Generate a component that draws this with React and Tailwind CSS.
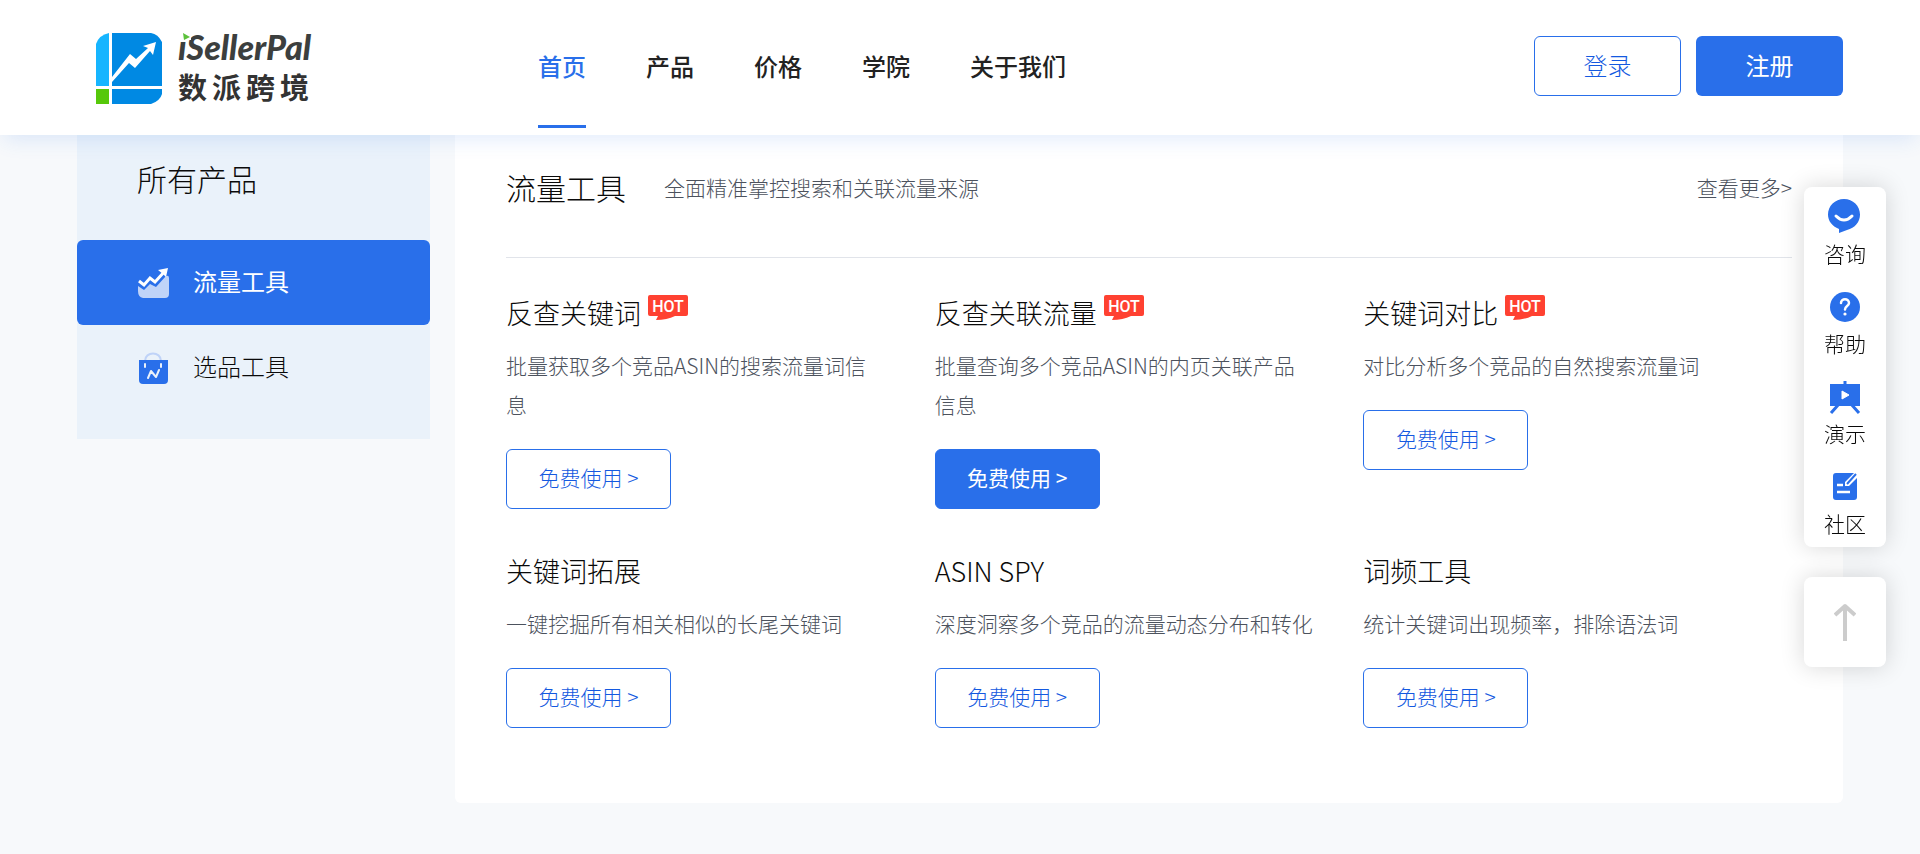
import React from 'react';
import clsx from 'clsx';

const navItems = ['首页', '产品', '价格', '学院', '关于我们'];

const tools = [
  { title: '反查关键词', desc: '批量获取多个竞品ASIN的搜索流量词信息', hot: true },
  { title: '反查关联流量', desc: '批量查询多个竞品ASIN的内页关联产品信息', hot: true, active: true },
  { title: '关键词对比', desc: '对比分析多个竞品的自然搜索流量词', hot: true },
  { title: '关键词拓展', desc: '一键挖掘所有相关相似的长尾关键词' },
  { title: 'ASIN SPY', desc: '深度洞察多个竞品的流量动态分布和转化' },
  { title: '词频工具', desc: '统计关键词出现频率，排除语法词' },
];

function Logo() {
  return (
    <svg width="220" height="84" viewBox="0 -5 220 84" role="img" aria-label="iSellerPal 数派跨境">
      <path d="M0 57V15Q3 6 13 4V57Z" fill="#16b5ff" />
      <rect x="0" y="60" width="13" height="15" fill="#56c80a" />
      <path d="M16 4H55Q62 5 66 13V57H16Z" fill="#0089e3" />
      <path d="M16 60H66V65Q64 72 55 75H16Z" fill="#0089e3" />
      <path d="M16 48L34 25L40 30L52 19L47 17L60 13L57 26L54 22L39 39L33 34L16 53Z" fill="#fff" />
      <text x="82" y="31" fontSize="34" fontWeight="900" fontStyle="italic" fill="#3c3f3e" fontFamily="Lato, sans-serif">
        iSellerPal
      </text>
      <path d="M84 2H95V11H84Z" fill="#fff" />
      <path d="M87 4L94 8L88 11Z" fill="#5cc13c" />
      <text x="82 116 150 184" y="70" fontSize="29" fontWeight="700" fill="#333" fontFamily="Lato, 'Noto Sans CJK SC', sans-serif">
        数派跨境
      </text>
    </svg>
  );
}

function TrafficIcon() {
  return (
    <svg width="32" height="32" viewBox="0 0 32 32" aria-hidden="true">
      <path d="M1 19L7 23L13 17L19 20L29 9Q32 8 32 11V27Q32 31 28 31H6Q1 30 1 24Z" fill="#bfd3f8" />
      <path d="M2 14L7 18L13 11L18 15L28 4" fill="none" stroke="#fff" strokeWidth="3" />
      <path d="M21 3L31 1L29 10L26 7Z" fill="#fff" />
    </svg>
  );
}

function BagIcon() {
  return (
    <svg width="32" height="34" viewBox="0 0 32 34" aria-hidden="true">
      <path d="M8 10C8 0 24 0 24 10" fill="none" stroke="#bfd3f8" strokeWidth="2" />
      <path d="M2 9H31V29Q31 33 27 33H6Q2 33 2 29Z" fill="#296fea" />
      <path d="M8 13V16M24 13V16" stroke="#eaf1fa" strokeWidth="2" strokeLinecap="round" />
      <path d="M11 27L14 20L19 26L22 19" fill="none" stroke="#eaf1fa" strokeWidth="2" strokeLinecap="round" strokeLinejoin="round" />
    </svg>
  );
}

function HotBadge() {
  return (
    <svg className="mt-0.5 ml-[7px]" width="40" height="26" viewBox="0 0 40 26">
      <path d="M2 0H38Q40 0 40 2V19Q40 21 38 21H27Q19 25 8 25L10 21H2Q0 21 0 19V2Q0 0 2 0Z" fill="#ff4131" />
      <text x="20" y="17" textAnchor="middle" fontSize="16" fontWeight="500" fill="#fff" fontFamily="Roboto, sans-serif">
        HOT
      </text>
    </svg>
  );
}

const floatItems = [
  {
    label: '咨询',
    icon: (
      <>
        <path d="M16 0C7 0 0 7 0 15.500C0 22 4 27 11 30V34L19 31C27 29 32 23 32 15.500C32 7 25 0 16 0Z" fill="#296fea" />
        <path d="M8 17Q16 25 24 17" fill="none" stroke="#fff" strokeWidth="3" strokeLinecap="round" />
      </>
    ),
  },
  {
    label: '帮助',
    icon: (
      <>
        <circle cx="17" cy="18" r="15" fill="#296fea" />
        <path d="M13 14C13 9 21 9 21 14C21 17 17 17 17 20.500" fill="none" stroke="#fff" strokeWidth="2.500" strokeLinecap="round" />
        <circle cx="17" cy="25" r="1.600" fill="#fff" />
      </>
    ),
  },
  {
    label: '演示',
    icon: (
      <>
        <path d="M17 2V6M11 25L3 34M23 25L31 34" stroke="#296fea" strokeWidth="3" />
        <path d="M2 5H32V27H2Z" fill="#296fea" />
        <path d="M14 12L21 16L14 20Z" fill="#fff" stroke="#fff" strokeLinejoin="round" />
      </>
    ),
  },
  {
    label: '社区',
    icon: (
      <>
        <path d="M8 4H26L17 13V17H21L29 9V28Q29 31 26 31H8Q5 31 5 28V7Q5 4 8 4Z" fill="#296fea" />
        <path d="M9 16H15M9 23H22" stroke="#fff" strokeWidth="2.500" />
        <path d="M28 5L19 15" stroke="#296fea" strokeWidth="2" />
      </>
    ),
  },
];

function ToolCard({ title, desc, hot, active }) {
  return (
    <div className="pr-12">
      <div className="flex items-start">
        <h3 className="text-[27px] leading-10 font-light text-[#0a0a0a]">{title}</h3>
        {hot && <HotBadge />}
      </div>
      <p className="mt-[13px] text-[21px] leading-[39px] font-light text-[#4c525d]">{desc}</p>
      <button
        className={clsx(
          'mt-[25px] h-[60px] w-[165px] rounded-md border border-[#296fea] pb-0.5 text-[21px] cursor-pointer',
          active ? 'bg-[#296fea] text-white' : 'bg-white font-light text-[#1459e0]'
        )}
      >
        免费使用 &gt;
      </button>
    </div>
  );
}

export default function App() {
  return (
    <div className="min-h-screen bg-[#f7f9fb] pb-[51px] font-['Noto_Sans_CJK_SC',sans-serif] text-[#222]">
      <header className="sticky top-0 z-10 flex h-[135px] items-center bg-white px-[77px] pb-[3px] shadow-[0_8px_20px_-4px_rgba(41,111,234,0.14)]">
        <a href="#" className="w-[461px] shrink-0 pl-[19px]">
          <Logo />
        </a>
        <nav className="flex h-full flex-1 gap-[60px] text-2xl font-medium">
          {navItems.map((item, i) => (
            <a
              key={item}
              href="#"
              className={clsx(
                'relative flex items-center',
                i === 0 && 'text-[#296fea] after:absolute after:inset-x-0 after:bottom-1 after:h-[3px] after:bg-[#296fea]'
              )}
            >
              {item}
            </a>
          ))}
        </nav>
        <div className="flex gap-[15px] text-2xl">
          <button className="h-[60px] w-[147px] rounded-md border border-[#296fea] pb-0.5 font-light text-[#1459e0]">登录</button>
          <button className="h-[60px] w-[147px] rounded-md bg-[#296fea] pb-0.5 text-white">注册</button>
        </div>
      </header>

      <main className="flex items-start gap-[25px] px-[77px]">
        <aside className="w-[353px] shrink-0 bg-[#eaf2fa] pb-[29px] text-2xl">
          <h2 className="h-[105px] pt-[19px] pl-[60px] text-[30px] leading-[48px] font-light text-[#0a0a0a]">所有产品</h2>
          <a href="#" className="flex h-[85px] items-center gap-6 rounded-md bg-[#296fea] pl-[60px] text-white">
            <TrafficIcon />
            <span className="pb-1">流量工具</span>
          </a>
          <a href="#" className="flex h-[85px] items-center gap-6 pl-[60px] font-light text-[#0a0a0a]">
            <BagIcon />
            <span className="pb-1">选品工具</span>
          </a>
        </aside>

        <section className="flex-1 rounded-b-md bg-white px-[51px] pb-[75px]">
          <div className="flex items-center border-b border-[#e1e4ea] pt-7 pb-[46px] leading-[48px] font-light">
            <h2 className="text-[30px] text-[#0a0a0a]">流量工具</h2>
            <p className="ml-[38px] flex-1 text-[21px] text-[#4c525d]">全面精准掌控搜索和关联流量来源</p>
            <a href="#" className="text-[21px] text-[#4c525d]">查看更多&gt;</a>
          </div>
          <div className="grid grid-cols-3 gap-y-[42px] pt-[35px]">
            {tools.map((tool) => (
              <ToolCard key={tool.title} {...tool} />
            ))}
          </div>
        </section>
      </main>

      {/* floating service bar */}
      <div className="fixed top-[187px] right-[34px] z-20 flex w-[82px] flex-col gap-[30px]">
        <div className="rounded-lg bg-white shadow-[0_0_24px_rgba(0,0,0,0.16)]">
          {floatItems.map((item) => (
            <a key={item.label} href="#" className="flex h-[90px] flex-col items-center pt-3 text-[21px] font-light text-[#0a0a0a]">
              <svg width="34" height="35" viewBox="0 0 34 35" aria-hidden="true">
                {item.icon}
              </svg>
              <span className="mt-0.5 leading-[34px]">{item.label}</span>
            </a>
          ))}
        </div>
        <button
          aria-label="返回顶部"
          className="flex h-[90px] items-center justify-center rounded-lg bg-white shadow-[0_0_24px_rgba(0,0,0,0.16)]"
        >
          <svg width="22" height="38" viewBox="0 0 22 38" fill="none" stroke="#ccc" strokeWidth="4">
            <path d="M11 3V38M1 12L11 3L21 12" strokeLinejoin="round" />
          </svg>
        </button>
      </div>
    </div>
  );
}
